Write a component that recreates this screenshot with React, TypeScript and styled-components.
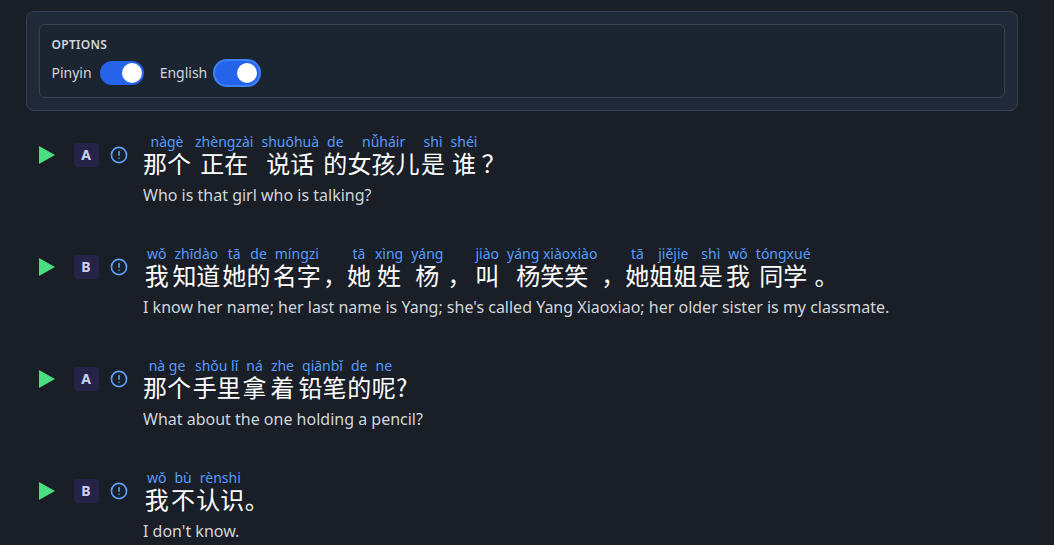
import React, { Fragment, useState } from 'react';
import styled, { createGlobalStyle, css } from 'styled-components';

type Word = { text: string; pinyin?: string };
type Line = { speaker: string; words: Word[]; english: string };

const w = (text: string, pinyin?: string): Word => ({ text, pinyin });

const lines: Line[] = [
  {
    speaker: 'A',
    words: [
      w('那个', 'nàgè'), w('正在', 'zhèngzài'), w('说话', 'shuōhuà'), w('的', 'de'),
      w('女孩儿', 'nǚháir'), w('是', 'shì'), w('谁', 'shéi'), w('？'),
    ],
    english: 'Who is that girl who is talking?',
  },
  {
    speaker: 'B',
    words: [
      w('我', 'wǒ'), w('知道', 'zhīdào'), w('她', 'tā'), w('的', 'de'), w('名字', 'míngzi'), w('，'),
      w('她', 'tā'), w('姓', 'xìng'), w('杨', 'yáng'), w('，'), w('叫', 'jiào'),
      w('杨笑笑', 'yáng xiàoxiào'), w('，'), w('她', 'tā'), w('姐姐', 'jiějie'), w('是', 'shì'),
      w('我', 'wǒ'), w('同学', 'tóngxué'), w('。'),
    ],
    english: "I know her name; her last name is Yang; she's called Yang Xiaoxiao; her older sister is my classmate.",
  },
  {
    speaker: 'A',
    words: [
      w('那个', 'nà ge'), w('手里', 'shǒu lǐ'), w('拿', 'ná'), w('着', 'zhe'),
      w('铅笔', 'qiānbǐ'), w('的', 'de'), w('呢', 'ne'), w('?'),
    ],
    english: 'What about the one holding a pencil?',
  },
  {
    speaker: 'B',
    words: [w('我', 'wǒ'), w('不', 'bù'), w('认识', 'rènshi'), w('。')],
    english: "I don't know.",
  },
];

const GlobalStyle = createGlobalStyle`
  * {
    box-sizing: border-box;
  }
  body {
    margin: 0;
    height: 545px;
    overflow: hidden;
    background: #1a1e26;
    color: #d1d5db;
    font-family: 'Noto Sans', 'Noto Sans CJK SC', sans-serif;
  }
`

const Page = styled.main`
  padding: 11px 36px 0 26px;
`

const Panel = styled.section`
  height: 100px;
  padding: 12px;
  border: 1px solid #374151;
  border-radius: 8px;
  background: #1f2937;
`

const OptionsBox = styled.div`
  height: 74px;
  padding: 11px 11.5px;
  border: 1px solid #374151;
  border-radius: 6px;
  background: #1b2431;
`

const OptionsTitle = styled.h2`
  margin: 0;
  font-size: 12px;
  line-height: 18px;
  font-weight: 600;
  letter-spacing: 0.3px;
`

const OptionsRow = styled.div`
  display: flex;
  align-items: center;
  gap: 16px;
  height: 24px;
  margin-top: 7px;
`

const Option = styled.label`
  display: flex;
  align-items: center;
  gap: 8px;
  font-size: 14px;
  line-height: 20px;
`

const Switch = styled.button<{ $on: boolean; $focused?: boolean }>`
  display: flex;
  justify-content: ${({ $on }) => ($on ? 'flex-end' : 'flex-start')};
  width: 44px;
  height: 24px;
  padding: 2px;
  border: 0;
  border-radius: 12px;
  outline: none;
  background: ${({ $on }) => ($on ? '#2563eb' : '#4b5563')};
  ${({ $focused }) => $focused && css`
    margin-left: -0.5px;
    box-shadow: 0 0 0 2px #3b82f6;
  `}
`

const Knob = styled.span`
  width: 20px;
  height: 20px;
  border-radius: 50%;
  background: #fff;
`

const Dialogue = styled.div`
  display: flex;
  flex-direction: column;
  gap: 24px;
  padding: 21px 0 0 13px;
`

const LineRow = styled.div`
  display: flex;
  height: 88px;
  padding-top: 11px;
`

const Controls = styled.div`
  display: flex;
  align-items: center;
  width: 104px;
  height: 24px;
`

const PlayIcon = styled.svg`
  width: 16px;
  height: 18px;
  margin-right: 19px;
  fill: #4ade80;
`

const Speaker = styled.span`
  width: 25px;
  height: 24px;
  padding-right: 1px;
  margin-right: 11px;
  border-radius: 4px;
  background: #252348;
  color: #c7d2fe;
  font-size: 14px;
  line-height: 24px;
  font-weight: 700;
  text-align: center;
`

const InfoIcon = styled.svg`
  width: 18px;
  height: 18px;
  fill: none;
  stroke: #5aa2fa;
  stroke-width: 1.6;
  stroke-linecap: round;
`

const Sentence = styled.div`
  display: flex;
  flex-direction: column;
  margin-top: -12px;
`

const Words = styled.div`
  display: flex;
  align-items: flex-end;
  height: 45px;
`

const WordBox = styled.span`
  display: flex;
  flex-direction: column;
  align-items: center;
  white-space: nowrap;
`

const Pinyin = styled.span`
  padding: 0 4px;
  color: #559cfc;
  font-size: 14px;
  line-height: 17px;
`

const Hanzi = styled.span`
  color: #fff;
  font-family: 'Noto Sans CJK SC', sans-serif;
  font-size: 24px;
  line-height: 26px;
`

const English = styled.p`
  margin: 7px 0 0;
  font-size: 16px;
  line-height: 24px;
  white-space: nowrap;
`

const OptionSwitch = ({ label, focused }: { label: string; focused?: boolean }) => {
  const [on, setOn] = useState(true);

  return (
    <Option>
      {label}
      <Switch $on={on} $focused={focused} role='switch' aria-checked={on} onClick={() => setOn(!on)}>
        <Knob />
      </Switch>
    </Option>
  )
}

const DialogueLine = ({ speaker, words, english }: Line) => (
  <LineRow>
    <Controls>
      <PlayIcon viewBox='0 0 16 18'>
        <path d='M0 0L16 9L0 18Z' />
      </PlayIcon>
      <Speaker>{speaker}</Speaker>
      <InfoIcon viewBox='0 0 18 18'>
        <circle cx='9' cy='9' r='7.6' />
        <path d='M9 5.5V9.3M9 12.2V12.3' />
      </InfoIcon>
    </Controls>
    <Sentence>
      <Words lang='zh-CN'>
        {words.map((word, i) => (
          <WordBox key={i}>
            {word.pinyin && <Pinyin>{word.pinyin}</Pinyin>}
            <Hanzi>{word.text}</Hanzi>
          </WordBox>
        ))}
      </Words>
      <English>{english}</English>
    </Sentence>
  </LineRow>
)

const App = (): React.ReactElement => (
  <Fragment>
    <GlobalStyle />
    <Page>
      <Panel>
        <OptionsBox>
          <OptionsTitle>OPTIONS</OptionsTitle>
          <OptionsRow>
            <OptionSwitch label='Pinyin' />
            <OptionSwitch label='English' focused />
          </OptionsRow>
        </OptionsBox>
      </Panel>
      <Dialogue>
        {lines.map((line, i) => <DialogueLine key={i} {...line} />)}
      </Dialogue>
    </Page>
  </Fragment>
)

export default App;
